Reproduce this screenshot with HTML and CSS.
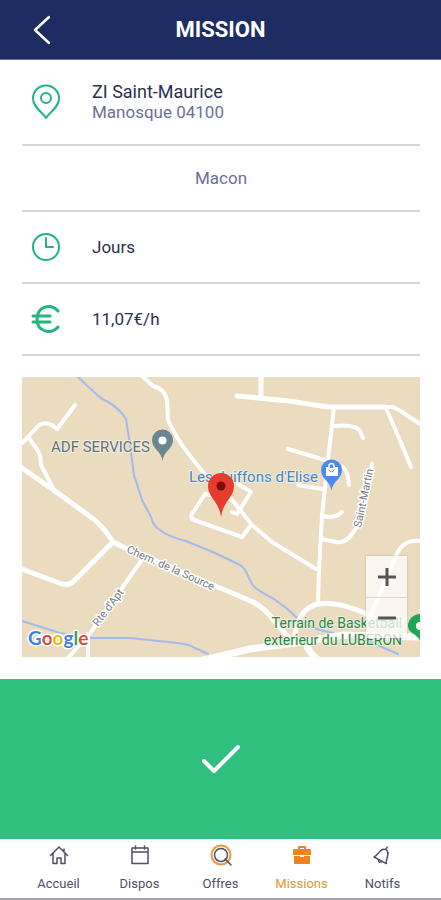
FILE: index.html
```html
<!DOCTYPE html>
<html lang="fr">
<head>
  <meta charset="utf-8">
  <meta name="viewport" content="width=device-width, initial-scale=1">
  <title>Mission</title>
  <link rel="stylesheet" href="styles.css">
</head>
<body>
  <header class="topbar">
    <button class="back" type="button" aria-label="Retour">
      <svg width="20" height="30" viewBox="0 0 20 30"><path d="M17 2 3 15l14 13"/></svg>
    </button>
    <h1>MISSION</h1>
  </header>

  <main class="content">
    <section class="infos">
      <div class="row row-address">
        <svg class="icon" width="30" height="36" viewBox="0 0 30 36"><path d="M15 34C11 28 2 23 2 14.500a13 13 0 0 1 26 0C28 23 19 28 15 34z"/><circle cx="15" cy="14" r="5"/></svg>
        <div>
          <p class="strong place-name">ZI Saint-Maurice</p>
          <p class="soft">Manosque 04100</p>
        </div>
      </div>
      <div class="row row-center">
        <p class="soft">Macon</p>
      </div>
      <div class="row">
        <svg class="icon" width="30" height="30" viewBox="0 0 30 30"><circle cx="15" cy="15" r="13"/><path d="M15 6v9h7"/></svg>
        <p class="strong">Jours</p>
      </div>
      <div class="row">
        <svg class="icon icon-euro" width="30" height="30" viewBox="0 0 30 30"><path d="M27 7C20-1 6 2 6 15s14 16 21 8M2 12h17M2 18h17"/></svg>
        <p class="strong">11,07€/h</p>
      </div>
    </section>

    <section class="map">
      <svg class="map-canvas" viewBox="22 377 398 280">
        <g class="river">
          <path d="M78 377l18 17q5 5 12 8 11 6 18 17l4 26 4 30 8 25 9 17q2 9 9 13 9 7 26 11l29 12 25 12q5 3 8 11l4 8q4 6 22 15 12 8 22 18 8 8 24 13l50 12 28 12"/>
          <path d="M22 621l38 12 25 5h45l48 5q10 1 17 5l13 6"/>
        </g>
        <g class="road">
          <path d="M75 405l-18 24q-10-9-18-4l-13 14-4 4M29 438l9 13q3 5 3 14l14 27"/>
          <path class="wide" d="M22 468l33 23 33 24q14 9 25 27l12 6 100 42 28 12q14 8 22 20l20 22M22 569l40 15q7 2 12-3l39-39"/>
          <path d="M141 561l-50 71-8 9-15 17M88 634v23"/>
          <path d="M143 377l10 9q12 3 14 15l1 19q9 20 23 37l19 24 23 20 19 24 20 17 44 27"/>
          <path d="M226 498l-21-4-13 20q-2 4 2 6l48 17 9-12M232 512l5 2 14-22-13-8"/>
          <path class="wide" d="M261 377v18M237 396l52 5 39 6h57"/>
          <path d="M334 407l-6 53-6 55-3 55-1 33"/>
          <path d="M385 407h8q7 3 12 7l15 10M386 408l13 30 12 29M334 426q21-2 26 5l3 7M288 449l37 11M298 485l24 4M343 467q5 4 6 18"/>
          <path d="M372 464l-8 42q-4 19-12 28-7 10-16 8l-14-3M323 516q12 3 19-4"/>
          <path class="wide" d="M294 642q3-35 25-38 21-3 52 12"/>
          <path d="M420 541q-19-2-25 18l-28 65"/>
          <path class="broad" d="M195 662l55-13 45-6 48-8 75 2M306 643q2 9 12 17"/>
        </g>
        <text class="place gray" x="51" y="452">ADF SERVICES</text>
        <text class="place blue" x="189" y="482">Les Juiffons d'Elise</text>
        <text class="place green" x="402" y="628" text-anchor="end">Terrain de Basketball</text>
        <text class="place green" x="402" y="645" text-anchor="end">exterieur du LUBERON</text>
        <text class="street" transform="translate(126 552) rotate(24)">Chem. de la Source</text>
        <text class="street" transform="translate(98 627) rotate(-53)">Rte d'Apt</text>
        <text class="street" transform="translate(361 528) rotate(-78)">Saint-Martin</text>
        <g class="pin-gray">
          <path d="M162.500 461c-1-10-10.500-12-10.500-21a10.500 10.500 0 0 1 21 0c0 9-9.500 11-10.500 21z"/>
          <circle cx="162.500" cy="440.500" r="4"/>
        </g>
        <g class="pin-blue">
          <path d="M331.500 491c-1-10-10.500-12-10.500-21a10.500 10.500 0 0 1 21 0c0 9-9.500 11-10.500 21z"/>
          <path class="bag" d="M326 467h12v9h-12z"/>
          <path class="handle" d="M329 468v-2a2.500 2.500 0 0 1 5 0v2"/>
          <path class="smile" d="M329 470q2.500 4 5 0"/>
        </g>
        <g class="pin-green">
          <path d="M421 645c-1-12-13-10-13-19a12 12 0 0 1 12-12h8v31z"/>
          <circle cx="420" cy="626" r="4"/>
        </g>
        <g class="pin-red">
          <path d="M221 517c-2-16-13-19-13-31a13 13 0 0 1 26 0c0 12-11 15-13 31z"/>
          <circle cx="221" cy="486" r="4.500"/>
        </g>
        <text class="google" x="28" y="645"><tspan class="g-blue">G</tspan><tspan class="g-red">o</tspan><tspan class="g-yellow">o</tspan><tspan class="g-blue">g</tspan><tspan class="g-green">l</tspan><tspan class="g-red">e</tspan></text>
      </svg>
      <div class="zoom">
        <button type="button" aria-label="Zoom avant"><svg width="20" height="20" viewBox="0 0 20 20"><path d="M1 10h18M10 1v18"/></svg></button>
        <button type="button" aria-label="Zoom arrière"><svg width="20" height="20" viewBox="0 0 20 20"><path d="M1 10h18"/></svg></button>
      </div>
    </section>
  </main>

  <button class="accept" type="button" aria-label="Accepter la mission">
    <svg width="40" height="32" viewBox="0 0 40 32"><path d="M3 18l10 10L37 4"/></svg>
  </button>

  <nav class="tabs">
    <a href="#accueil">
      <svg width="20" height="20" viewBox="0 0 20 20"><path d="M1.500 10.500 10 2l8.500 8.500M15 4v3M4 9v9.500h4V13h4v5.500h4V9"/></svg>
      <span>Accueil</span>
    </a>
    <a href="#dispos">
      <svg width="20" height="20" viewBox="0 0 20 20"><path d="M2 3h16v15.500H2zM2 7h16M5.500 1v3M14.500 1v3"/></svg>
      <span>Dispos</span>
    </a>
    <a href="#offres">
      <svg width="24" height="24" viewBox="0 0 24 24"><circle class="ring" cx="12" cy="12" r="9.500"/><circle cx="12" cy="12" r="6.500"/><path d="M16 16l6 6"/></svg>
      <span>Offres</span>
    </a>
    <a class="active" href="#missions">
      <svg width="20" height="20" viewBox="0 0 20 20"><path class="fill" d="M2 4h4V2q0-1 1-1h6q1 0 1 1v2h4q1 0 1 1v5H1V5q0-1 1-1zM8 4h4V3H8zM2 11h6v1h4v-1h6v7q0 1-1 1H3q-1 0-1-1z"/></svg>
      <span>Missions</span>
    </a>
    <a href="#notifs">
      <svg width="20" height="20" viewBox="0 0 20 20"><g transform="rotate(28 10 10)"><path d="M3 16c3-3 1-12 7-12s4 9 7 12zM10 4V1M8 16q2 4 4 0"/></g></svg>
      <span>Notifs</span>
    </a>
  </nav>
</body>
</html>
```

FILE: styles.css
```css
* {
  box-sizing: border-box;
}

body {
  margin: 0;
  min-height: 100vh;
  display: flex;
  flex-direction: column;
  background-color: #fff;
  color: #1f2a5c;
  font-family: Roboto, "Liberation Sans", sans-serif;
}

button {
  border: 0;
  padding: 0;
  background: none;
  cursor: pointer;
}

svg {
  display: block;
  fill: none;
  stroke-linecap: round;
  stroke-linejoin: round;
}

.topbar {
  display: grid;
  grid-template-columns: 60px 1fr 60px;
  align-items: center;
  height: 60px;
  background-color: #1e2c64;
  border-bottom: 1px solid #6c7499;
  color: #fff;
}

.topbar h1 {
  margin: 0;
  font-size: 22px;
  line-height: 28px;
  font-weight: 700;
  text-align: center;
}

.back {
  justify-self: end;
  margin-right: 8px;
}

.back svg {
  stroke: #fff;
  stroke-width: 2.5;
}

.content {
  padding: 0 21px 22px 22px;
}

.infos {
  margin-bottom: 21px;
}

.row {
  display: flex;
  align-items: center;
  gap: 31px;
  min-height: 72px;
  padding: 0 9px;
  border-bottom: 2px solid #d6d6d8;
}

.row-address {
  min-height: 86px;
}

.row-center {
  justify-content: center;
  min-height: 66px;
}

.row p {
  margin: 0;
  font-size: 17px;
  line-height: 21px;
}

.row .place-name {
  font-size: 18px;
}

.row .strong {
  color: #2b3050;
}

.row .soft {
  color: #6b7196;
}

.icon {
  stroke: #22b57c;
  stroke-width: 2;
}

.icon-euro {
  stroke-width: 3;
}

.map {
  position: relative;
  overflow: hidden;
}

.map-canvas {
  width: 100%;
  height: auto;
  background-color: #ebdbbf;
}

.river {
  stroke: #a3bbec;
  stroke-width: 2;
}

.road {
  stroke: #fff;
  stroke-width: 4;
}

.road .wide {
  stroke-width: 5;
}

.road .broad {
  stroke-width: 7;
}

.place {
  font-size: 15px;
  stroke: #f6eedf;
  stroke-width: 2px;
  paint-order: stroke;
}

.gray {
  fill: #5f7078;
}

.blue {
  fill: #3d87c9;
}

.green {
  fill: #218a4b;
  font-size: 14px;
}

.street {
  font-size: 11px;
  fill: #777b82;
  stroke: #fff;
  stroke-width: 3px;
  paint-order: stroke;
}

.pin-gray {
  fill: #6b8591;
}

.pin-blue {
  fill: #4a8cec;
}

.pin-green {
  fill: #1fa556;
}

.pin-red {
  fill: #e63c30;
}

.pin-gray circle,
.pin-green circle,
.pin-blue .bag {
  fill: #fff;
}

.pin-blue .handle {
  stroke: #fff;
  stroke-width: 1.5;
}

.pin-blue .smile {
  fill: none;
  stroke: #4a8cec;
}

.pin-red circle {
  fill: #7d0f0b;
}

.google {
  font-family: Lato, Roboto, sans-serif;
  font-size: 19px;
  font-weight: 700;
  stroke: #fff;
  stroke-width: 3px;
  paint-order: stroke;
}

.g-blue {
  fill: #4080e0;
}

.g-red {
  fill: #e0493c;
}

.g-yellow {
  fill: #f2b90f;
}

.g-green {
  fill: #33a554;
}

.zoom {
  position: absolute;
  right: 13px;
  bottom: 19px;
  width: 41px;
  background-color: rgba(255, 255, 255, 0.75);
  box-shadow: 0 0 2px rgba(0, 0, 0, 0.2);
}

.zoom button {
  display: flex;
  align-items: center;
  justify-content: center;
  width: 100%;
  height: 41px;
}

.zoom button + button {
  border-top: 1px solid #dcd6ca;
}

.zoom svg {
  stroke: #555;
  stroke-width: 3;
  stroke-linecap: butt;
}

.accept {
  flex: 1;
  display: flex;
  align-items: center;
  justify-content: center;
  min-height: 120px;
  background-color: #2fbf7f;
}

.accept svg {
  stroke: #fff;
  stroke-width: 4;
}

.tabs {
  display: flex;
  height: 61px;
  padding: 0 18px;
  border-bottom: 2px solid #a5a5a8;
}

.tabs a {
  flex: 1;
  display: grid;
  grid-template-rows: 32px 26px;
  align-items: center;
  justify-items: center;
  color: #4d5068;
  font-size: 13px;
  line-height: 16px;
  text-decoration: none;
}

.tabs svg {
  stroke: #4d5068;
  stroke-width: 1.5;
}

.tabs .ring {
  stroke: #eb9a3a;
  stroke-width: 2;
}

.tabs .fill {
  fill: #ef8320;
  fill-rule: evenodd;
  stroke: none;
}

.tabs .active {
  color: #dc9a2c;
}
```
